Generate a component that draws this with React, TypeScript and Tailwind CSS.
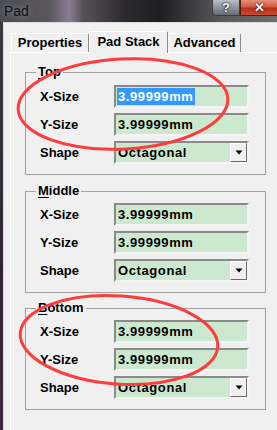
import React from "react";

const FONT = { fontFamily: '"Liberation Sans", Arial, sans-serif' };

function Field({ value, selected }: { value: string; selected?: boolean }) {
  return (
    <div className="w-[135px] h-[23px] bg-[#cce8cf] border-2 border-t-[#8a8a8a] border-l-[#8a8a8a] border-r-[#f4f4f4] border-b-[#f4f4f4] flex items-center pl-[1px]">
      <span
        className={
          "text-[13px] font-bold leading-[17px] tracking-[0.6px] px-[1px] " +
          (selected ? "bg-[#3399ff] text-white" : "text-black")
        }
      >
        {value}
      </span>
    </div>
  );
}

function Combo({ value }: { value: string }) {
  return (
    <div className="w-[135px] h-[23px] bg-[#cce8cf] border-2 border-t-[#8a8a8a] border-l-[#8a8a8a] border-r-[#f4f4f4] border-b-[#f4f4f4] flex items-center pl-[2px]">
      <span className="flex-1 text-[13px] font-bold leading-[17px] tracking-[0.6px] text-black">{value}</span>
      <div className="w-[17px] h-[19px] bg-[#f0f0f0] border border-t-white border-l-white border-r-[#6a6a6a] border-b-[#6a6a6a] flex items-center justify-center">
        <svg width="8" height="5" viewBox="0 0 8 5">
          <polygon points="0.5,0.5 7.5,0.5 4,4.5" fill="#000" />
        </svg>
      </div>
    </div>
  );
}

function Row({ label, children }: { label: string; children: React.ReactNode }) {
  return (
    <div className="flex items-center">
      <div className="w-[74px] text-[13px] font-bold text-black leading-[16px]">{label}</div>
      {children}
    </div>
  );
}

function Group({
  first,
  rest,
  pt,
  selected,
}: {
  first: string;
  rest: string;
  pt: string;
  selected?: boolean;
}) {
  return (
    <div className={"relative w-[241px] border border-[#a0a0a0] pl-[14px] pb-[10px] " + pt}>
      <div className="absolute left-[10px] -top-[9px] bg-[#f0f0f0] px-[2px] text-[13px] font-bold leading-[16px] text-black">
        <span className="underline underline-offset-[2px]">{first}</span>
        {rest}
      </div>
      <div className="flex flex-col gap-[5px]">
        <Row label="X-Size">
          <Field value="3.99999mm" selected={selected} />
        </Row>
        <Row label="Y-Size">
          <Field value="3.99999mm" />
        </Row>
        <Row label="Shape">
          <Combo value="Octagonal" />
        </Row>
      </div>
    </div>
  );
}

export default function App() {
  return (
    <div className="relative w-[277px] h-[430px] overflow-hidden bg-[#3a3440]" style={FONT}>
      {/* Title bar */}
      <div className="h-[22px] flex items-start bg-[linear-gradient(90deg,#4c4c54_0%,#5a5660_18%,#8a7c92_25%,#5a5058_30%,#2c2a2e_45%,#1e1e20_58%,#3a3a3c_68%,#5a5a5c_80%,#6c6c6c_100%)]">
        <div className="pl-[4px] pt-[2px] text-[14px] leading-[18px] text-[#101018] [text-shadow:0_0_6px_rgba(200,200,210,0.6)]">
          Pad
        </div>
        <div className="ml-auto flex">
          <div className="w-[28px] h-[16px] rounded-bl-[4px] border border-t-0 border-[#3a3a40] bg-[linear-gradient(180deg,#b8bec6_0%,#8c949e_50%,#646c76_100%)] flex items-center justify-center text-white text-[13px] font-bold leading-none [text-shadow:0_0_2px_#000,0_0_1px_#000]">
            ?
          </div>
          <div className="w-[37px] h-[16px] border border-t-0 border-r-0 border-[#5a1a10] bg-[linear-gradient(180deg,#e8907c_0%,#d05a40_45%,#b83018_55%,#c84a30_100%)] flex items-center justify-center text-white text-[13px] font-bold leading-none [text-shadow:0_0_2px_#300,0_0_1px_#000]">
            ✕
          </div>
        </div>
      </div>

      {/* Body */}
      <div className="flex h-[408px]">
        <div className="w-[3px] bg-[linear-gradient(180deg,#3a3a40_0%,#2e2630_60%,#3c2a3a_100%)]" />
        <div className="flex-1 bg-[#f0f0f0] border-t border-l border-[#dcdcdc] pt-[8px]">
          {/* Tabs */}
          <div className="flex items-end h-[21px] pl-[7px]">
            <div className="w-[78px] h-[19px] border border-b-0 border-t-white border-l-white border-r-[#8a8a8a] rounded-t-[2px] flex items-center justify-center text-[13px] font-bold text-black">
              Properties
            </div>
            <div className="relative z-10 w-[79px] h-[22px] -mb-[1px] bg-[#f0f0f0] border border-b-0 border-t-white border-l-white border-r-[#8a8a8a] rounded-t-[2px] flex items-center justify-center pb-[2px] text-[13px] font-bold text-black">
              Pad Stack
            </div>
            <div className="w-[73px] h-[19px] border border-b-0 border-t-white border-l-[#f8f8f8] border-r-[#8a8a8a] rounded-t-[2px] flex items-center justify-center text-[13px] font-bold text-black">
              Advanced
            </div>
          </div>
          {/* Panel */}
          <div className="ml-[6px] h-[400px] border-t border-l border-white pl-[14px] pt-[19px]">
            <Group first="T" rest="op" pt="pt-[12px]" selected />
            <div className="mt-[16px]">
              <Group first="M" rest="iddle" pt="pt-[11px]" />
            </div>
            <div className="mt-[15px]">
              <Group first="B" rest="ottom" pt="pt-[11px]" />
            </div>
          </div>
        </div>
      </div>

      {/* Red annotation ellipses */}
      <svg className="absolute inset-0 pointer-events-none" width="277" height="430" viewBox="0 0 277 430">
        <ellipse cx="123" cy="104" rx="105" ry="45" fill="none" stroke="#ff3c3c" strokeWidth="3" transform="rotate(-3 123 104)" />
        <ellipse cx="119" cy="340" rx="99" ry="44" fill="none" stroke="#ff3c3c" strokeWidth="3" transform="rotate(4 119 340)" />
      </svg>
    </div>
  );
}
